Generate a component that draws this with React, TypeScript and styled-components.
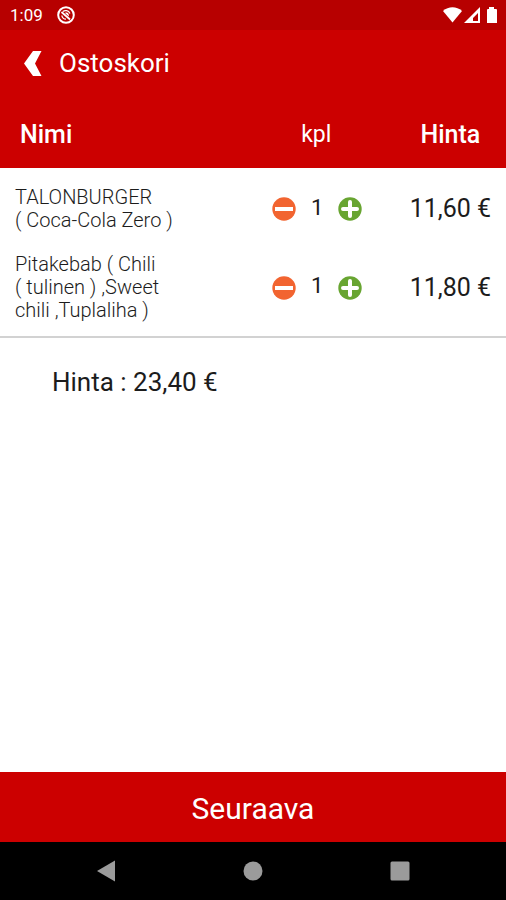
import React, { useState } from "react";
import styled, { createGlobalStyle } from "styled-components";

const red = "#cc0000";

const GlobalStyle = createGlobalStyle`
  * { box-sizing: border-box; }
  html, body, #root { height: 100%; }
  body { margin: 0; background: #fff; font-family: Roboto, sans-serif; color: #1c1c1c; }
  button { font: inherit; color: inherit; border: 0; padding: 0; background: none; cursor: pointer; }
`;

const Screen = styled.div`
  min-height: 100%;
  display: flex;
  flex-direction: column;
`;

const StatusBar = styled.div`
  display: flex;
  align-items: center;
  justify-content: space-between;
  height: 30px;
  padding: 0 6px 0 10px;
  background: #b70000;
  color: #fff;
  font-size: 17px;
`;

const StatusGroup = styled.div<{ $gap: number }>`
  display: flex;
  align-items: center;
  gap: ${(p) => p.$gap}px;
`;

const AppBar = styled.header`
  display: flex;
  align-items: center;
  gap: 16px;
  height: 68px;
  padding: 0 23px 2px;
  background: ${red};
  color: #fff;
`;

const BackButton = styled.button`
  display: flex;
`;

const Title = styled.h1`
  margin: 0;
  font-size: 26px;
  font-weight: 400;
  line-height: 30px;
`;

const CartTable = styled.table`
  width: 100%;
  table-layout: fixed;
  border-collapse: collapse;
  border-bottom: 2px solid #d2d2d2;

  tbody tr:first-child td { padding-top: 18px; }
  tbody tr:last-child td { padding: 11px 0 14px; }
  tbody td:first-child, tbody tr:last-child td:first-child { padding-left: 15px; }
`;

const HeadCell = styled.th<{ $width: string; $start?: boolean; $weight: number; $size: number }>`
  width: ${(p) => p.$width};
  height: 70px;
  padding: 2px 0 0 ${(p) => (p.$start ? 20 : 0)}px;
  background: ${red};
  color: #fff;
  font-size: ${(p) => p.$size}px;
  font-weight: ${(p) => p.$weight};
  text-align: ${(p) => (p.$start ? "left" : "center")};
`;

const Cell = styled.td`
  padding: 10px 0;
  text-align: center;
`;

const NameCell = styled(Cell)`
  text-align: left;
  font-size: 20px;
  font-weight: 300;
  line-height: 23px;
`;

const ItemName = styled.div`
  max-width: 164px;
`;

const PriceCell = styled(Cell)`
  font-size: 25px;
  line-height: 30px;
  white-space: nowrap;
`;

const Stepper = styled.div`
  display: flex;
  align-items: center;
  justify-content: center;
  gap: 12px;
  padding-left: 2px;
`;

const StepButton = styled.button`
  display: flex;
`;

const Count = styled.output`
  width: 18px;
  padding-bottom: 3px;
  font-size: 22px;
  line-height: 26px;
`;

const Total = styled.p`
  flex: 1;
  margin: 0;
  padding: 29px 52px;
  font-size: 26px;
  line-height: 30px;
`;

const NextButton = styled.button`
  && {
    height: 70px;
    padding-top: 2px;
    background: ${red};
    color: #fff;
    font-size: 30px;
  }
`;

const NavBar = styled.nav`
  display: flex;
  align-items: center;
  justify-content: space-between;
  height: 58px;
  padding: 0 19%;
  background: #000;
`;

const NavButton = styled.button`
  display: flex;
`;

const StepIcon = ({ plus }: { plus?: boolean }) => (
  <svg width="24" height="24" viewBox="0 0 24 24" aria-hidden="true">
    <circle cx="12" cy="12" r="11.700" fill={plus ? "#68a531" : "#f26430"} />
    <path
      d={plus ? "M5 12H19M12 5V19" : "M3 12H21"}
      stroke="#fff"
      strokeWidth="4"
      strokeLinecap={plus ? "round" : "butt"}
    />
  </svg>
);

const initialItems = [
  { name: "TALONBURGER (\u00a0Coca-Cola Zero )", cents: 1160, count: 1 },
  { name: "Pitakebab ( Chili (\u00a0tulinen ) ,Sweet chili ,Tuplaliha )", cents: 1180, count: 1 },
];

const euros = (cents: number) => `${(cents / 100).toFixed(2).replace(".", ",")} €`;

export default function App() {
  const [items, setItems] = useState(initialItems);
  const change = (index: number, by: number) =>
    setItems(items.map((it, i) => (i === index ? { ...it, count: Math.max(0, it.count + by) } : it)));
  const total = items.reduce((sum, it) => sum + it.cents * it.count, 0);

  return (
    <Screen>
      <GlobalStyle />
      <StatusBar>
        <StatusGroup $gap={14}>
          <span>1:09</span>
          <svg width="18" height="18" viewBox="0 0 18 18" fill="none" stroke="#fff" aria-hidden="true">
            <circle cx="9" cy="9" r="7.8" strokeWidth="2" />
            <path d="M6 5.500C8 3.800 11.500 4.500 13 7.500M4.800 9.500A4.500 4.500 0 0 0 9 13.200" strokeWidth="1.3" />
            <path d="M4.500 6L13 13.500" strokeWidth="1.8" />
            <path d="M8 7C10 5.800 12.300 7.500 11.800 10.500Z" fill="#fff" stroke="none" />
          </svg>
        </StatusGroup>
        <StatusGroup $gap={2}>
          <svg width="19" height="16" viewBox="0 0 19 16" aria-hidden="true">
            <path d="M0 4C5.500 -1 13.500 -1 19 4L9.500 15.500Z" fill="#fff" />
          </svg>
          <svg width="16" height="16" viewBox="0 0 16 16" aria-hidden="true">
            <path fillRule="evenodd" d="M16 0V16H0ZM14 6L9 11V14H14Z" fill="#fff" />
          </svg>
          <svg width="18" height="18" viewBox="0 0 18 18" aria-hidden="true">
            <path d="M7 3V1H12V3H14Q15 3 15 4V17H5V4Q5 3 6 3Z" fill="#fff" />
          </svg>
        </StatusGroup>
      </StatusBar>
      <AppBar>
        <BackButton aria-label="Takaisin">
          <svg width="20" height="26" viewBox="0 0 20 26" aria-hidden="true">
            <path d="M10 1H18.500L12 13.500L18.500 26H10L1 13.500Z" fill="#fff" />
          </svg>
        </BackButton>
        <Title>Ostoskori</Title>
      </AppBar>
      <CartTable>
        <thead>
          <tr>
            <HeadCell scope="col" $width="47%" $start $weight={500} $size={25}>Nimi</HeadCell>
            <HeadCell scope="col" $width="31%" $weight={400} $size={23}>kpl</HeadCell>
            <HeadCell scope="col" $width="22%" $weight={500} $size={25}>Hinta</HeadCell>
          </tr>
        </thead>
        <tbody>
          {items.map((item, i) => (
            <tr key={item.name}>
              <NameCell><ItemName>{item.name}</ItemName></NameCell>
              <Cell>
                <Stepper>
                  <StepButton aria-label="Vähennä" onClick={() => change(i, -1)}><StepIcon /></StepButton>
                  <Count>{item.count}</Count>
                  <StepButton aria-label="Lisää" onClick={() => change(i, 1)}><StepIcon plus /></StepButton>
                </Stepper>
              </Cell>
              <PriceCell>{euros(item.cents)}</PriceCell>
            </tr>
          ))}
        </tbody>
      </CartTable>
      <Total>Hinta : {euros(total)}</Total>
      <NextButton>Seuraava</NextButton>
      <NavBar>
        <NavButton aria-label="Edellinen">
          <svg width="20" height="22" viewBox="0 0 20 22" aria-hidden="true">
            <path d="M19 0.500V21.500L1 11Z" fill="#9b9b9b" />
          </svg>
        </NavButton>
        <NavButton aria-label="Koti">
          <svg width="20" height="20" viewBox="0 0 20 20" aria-hidden="true">
            <circle cx="10" cy="10" r="9.500" fill="#9b9b9b" />
          </svg>
        </NavButton>
        <NavButton aria-label="Viimeisimmät">
          <svg width="20" height="20" viewBox="0 0 20 20" aria-hidden="true">
            <rect x="0.500" y="0.500" width="19" height="19" rx="1.500" fill="#9b9b9b" />
          </svg>
        </NavButton>
      </NavBar>
    </Screen>
  );
}
